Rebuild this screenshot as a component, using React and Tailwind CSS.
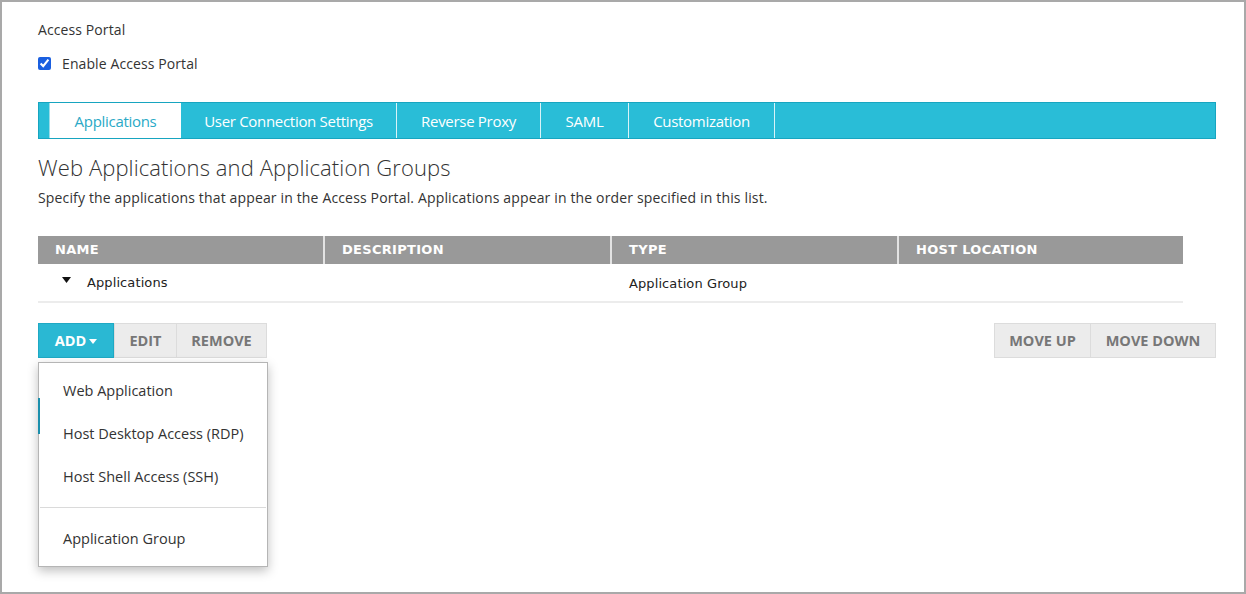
import React from 'react';

const tabs = ['Applications', 'User Connection Settings', 'Reverse Proxy', 'SAML', 'Customization'];
const tabWidths = ['w-[132px]', 'w-[216px]', 'w-[144px]', 'w-[88px]', 'w-[146px]'];

const columns = [
  { label: 'NAME', w: 'w-[285px]' },
  { label: 'DESCRIPTION', w: 'w-[287px] border-l-2 border-[#e3e3e3]' },
  { label: 'TYPE', w: 'w-[287px] border-l-2 border-[#e3e3e3]' },
  { label: 'HOST LOCATION', w: 'w-[286px] border-l-2 border-[#e3e3e3]' },
];

const menuItems = ['Web Application', 'Host Desktop Access (RDP)', 'Host Shell Access (SSH)'];

const App = () => {
  return (
    <div className="w-[1246px] h-[594px] bg-white border-2 border-[#a9a9a9] relative overflow-hidden font-['Open_Sans',sans-serif] text-[#333]">
      <div className="pl-[36px] pr-[28px]">
        <p className="pt-[18px] text-[14px] leading-[20px] text-[#333] tracking-[0.1px]">Access Portal</p>
        <label className="flex items-center mt-[13px] h-[20px]">
          <input type="checkbox" defaultChecked className="w-[13px] h-[13px] accent-[#1a5fe0] m-0" />
          <span className="ml-[11px] text-[14px] text-[#333] tracking-[0.1px]">Enable Access Portal</span>
        </label>

        {/* tabs */}
        <div className="mt-[29px] h-[37px] bg-[#29bdd7] border border-[#17a5c0] flex pl-[10px]">
          {tabs.map((t, i) => (
            <div
              key={t}
              className={`${tabWidths[i]} h-full flex items-center justify-center pt-[1px] text-[15px] tracking-[-0.3px] ${i === 0 ? 'bg-white text-[#2aa9c6] border-l border-[#9bdce8]' : 'text-white border-r border-[#d9f3f8]'}`}
            >
              {t}
            </div>
          ))}
        </div>

        <h2 className="mt-[14px] text-[22px] font-light leading-[28px] text-[#333] tracking-[0.1px]">Web Applications and Application Groups</h2>
        <p className="mt-[7px] text-[14px] leading-[20px] text-[#333] tracking-[0.15px]">Specify the applications that appear in the Access Portal. Applications appear in the order specified in this list.</p>

        {/* table */}
        <div className="mt-[28px] w-[1145px] font-['DejaVu_Sans',sans-serif]">
          <div className="flex h-[28px] bg-[#999999]">
            {columns.map((c) => (
              <div key={c.label} className={`${c.w} flex items-center pl-[17px] text-[13px] font-bold text-white tracking-[0.3px]`}>
                {c.label}
              </div>
            ))}
          </div>
          <div className="flex h-[39px] items-center border-b-2 border-[#ececec] text-[13px] text-[#222] tracking-[0.1px]">
            <div className="w-[287px] flex items-center pl-[24px]">
              <svg width="9" height="6" viewBox="0 0 9 6" className="-mt-[6px]">
                <path d="M0 0 L9 0 L4.5 6 Z" fill="#111" />
              </svg>
              <span className="ml-[16px]">Applications</span>
            </div>
            <div className="w-[287px]" />
            <div className="pl-[17px] pt-[3px]">Application Group</div>
          </div>
        </div>

        {/* buttons */}
        <div className="mt-[20px] flex justify-between w-[1178px]">
          <div className="flex h-[35px]">
            <button className="w-[76px] h-full bg-[#2ab8d3] border border-[#1fa9c4] text-white font-bold text-[14.5px] flex items-center justify-center">
              ADD
              <svg width="8" height="5" viewBox="0 0 8 5" className="ml-[3px] mt-[2px]">
                <path d="M0 0 L8 0 L4 5 Z" fill="#fff" />
              </svg>
            </button>
            <button className="w-[63px] h-full bg-[#ececec] border border-[#dcdcdc] text-[#777] font-bold text-[14.5px]">EDIT</button>
            <button className="w-[90px] h-full bg-[#ececec] border border-[#dcdcdc] border-l-0 text-[#777] font-bold text-[14.5px]">REMOVE</button>
          </div>
          <div className="flex h-[35px]">
            <button className="w-[97px] h-full bg-[#ececec] border border-[#dcdcdc] text-[#777] font-bold text-[14.5px]">MOVE UP</button>
            <button className="w-[125px] h-full bg-[#ececec] border border-[#dcdcdc] border-l-0 text-[#777] font-bold text-[14.5px]">MOVE DOWN</button>
          </div>
        </div>
      </div>

      {/* dropdown menu */}
      <div className="absolute left-[36px] top-[360px] w-[230px] bg-white border border-[#b5b5b5] shadow-[0_4px_10px_rgba(0,0,0,0.25)] text-[14.5px] text-[#333]">
        <span className="absolute -left-[1px] top-[35px] w-[2px] h-[36px] bg-[#1b8fac]" />
        <div className="pt-[7px]">
          {menuItems.map((m) => (
            <div key={m} className="h-[43px] flex items-center pl-[24px] pb-[2px]">{m}</div>
          ))}
        </div>
        <div className="mt-[8px] border-t border-[#dadada] mx-[1px]" />
        <div className="h-[58px] flex items-center pl-[24px] pt-[4px]">Application Group</div>
      </div>
    </div>
  );
};

export default App;
